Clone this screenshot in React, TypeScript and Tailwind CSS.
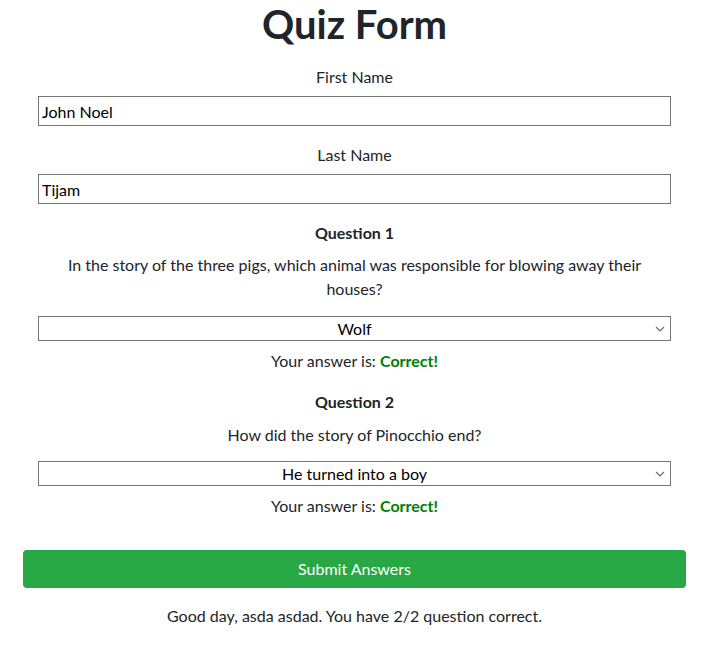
import React from "react";

const Chevron = () => (
  <svg className="pointer-events-none absolute right-[6px] top-1/2 -translate-y-1/2" width="10" height="6" viewBox="0 0 10 6">
    <path d="M1 1 L5 5 L9 1" fill="none" stroke="#6b6b6b" strokeWidth="1.2" />
  </svg>
);

export default function App() {
  return (
    <div className="w-[717px] h-[648px] bg-white text-[#212529] text-[16px] leading-[24px]" style={{ fontFamily: "Lato, 'Noto Sans', sans-serif" }}>
      <div className="ml-[23px] w-[663px] flex flex-col items-center">
        <h1 className="text-[40px] leading-[48px] font-bold h-[48px] mt-0">Quiz Form</h1>
        <div className="w-[633px] flex flex-col items-center">
          <label className="mt-[17px]">First Name</label>
          <input readOnly value="John Noel" className="mt-[7px] w-full h-[30px] border border-[#767676] px-[3px] text-[16px] text-black outline-none" />
          <label className="mt-[17px]">Last Name</label>
          <input readOnly value="Tijam" className="mt-[7px] w-full h-[30px] border border-[#767676] px-[3px] text-[16px] text-black outline-none" />
          <div className="mt-[17px] font-bold">Question 1</div>
          <p className="mt-[8px] text-center leading-[24px] px-[20px]">In the story of the three pigs, which animal was responsible for blowing away their houses?</p>
          <div className="relative mt-[15px] w-full">
            <div className="w-full h-[25px] border border-[#767676] flex items-center justify-center text-black leading-[22px]">Wolf</div>
            <Chevron />
          </div>
          <div className="mt-[8px]">Your answer is: <span className="font-bold text-[#008000]">Correct!</span></div>
          <div className="mt-[17px] font-bold">Question 2</div>
          <p className="mt-[9px] text-center">How did the story of Pinocchio end?</p>
          <div className="relative mt-[14px] w-full">
            <div className="w-full h-[25px] border border-[#767676] flex items-center justify-center text-black leading-[22px]">He turned into a boy</div>
            <Chevron />
          </div>
          <div className="mt-[8px]">Your answer is: <span className="font-bold text-[#008000]">Correct!</span></div>
        </div>
        <button className="mt-[32px] w-full h-[38px] rounded-[4px] bg-[#28a745] text-white text-[16px]">Submit Answers</button>
        <div className="mt-[16px]">Good day, asda asdad. You have 2/2 question correct.</div>
      </div>
    </div>
  );
}
